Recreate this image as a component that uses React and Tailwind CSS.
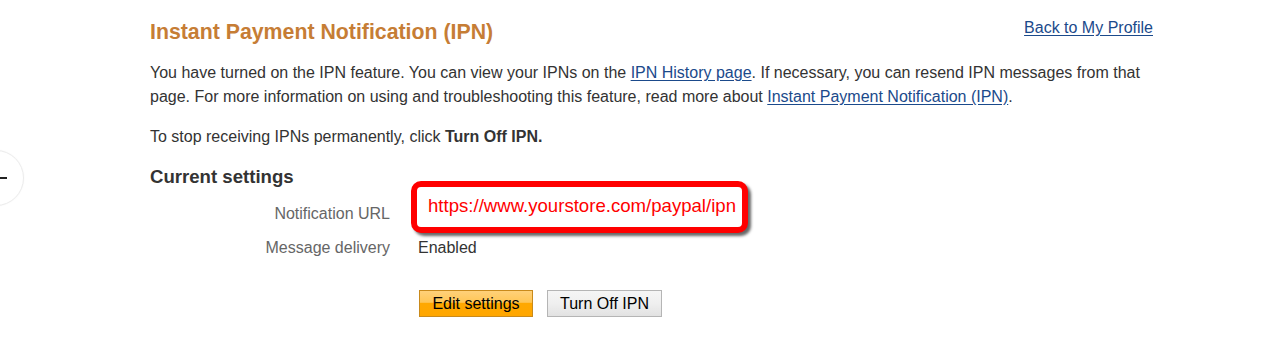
export default function App() {
  const font = { fontFamily: '"Liberation Sans", Arial, Helvetica, sans-serif' };
  return (
    <div className="relative w-[1261px] h-[344px] bg-white overflow-hidden" style={font}>
      {/* partially hidden round button at left edge */}
      <div className="absolute left-[-32px] top-[150px] w-[56px] h-[56px] rounded-full border border-[#ececec] bg-white shadow-[0_0_2px_rgba(0,0,0,0.04)] flex items-center justify-end pr-[16px]">
        <div className="w-[8px] h-[2px] bg-[#222]" />
      </div>

      <div className="ml-[150px] w-[1004px] pt-[19px]">
        <div className="flex justify-between items-start">
          <h1 className="text-[21.3px] leading-[26px] font-bold text-[#c67d35]">Instant Payment Notification (IPN)</h1>
          <a href="#" className="mt-[-1px] mr-[1px] text-[16px] leading-[20px] text-[#1b4a8b] underline underline-offset-[2px] decoration-[#1b4a8b]">Back to My Profile</a>
        </div>

        <p className="mt-[16px] text-[16px] leading-[24px] text-[#333]">
          You have turned on the IPN feature. You can view your IPNs on the{" "}
          <a href="#" className="text-[#1b4a8b] underline underline-offset-[2px]">IPN History page</a>. If necessary, you can resend IPN messages from that page. For more information on using and troubleshooting this feature, read more about{" "}
          <a href="#" className="text-[#1b4a8b] underline underline-offset-[2px]">Instant Payment Notification (IPN)</a>.
        </p>

        <p className="mt-[16px] text-[16px] leading-[24px] text-[#333]">
          To stop receiving IPNs permanently, click <span className="font-bold">Turn Off IPN.</span>
        </p>

        <h2 className="mt-[16px] text-[18.6px] leading-[24px] font-bold text-[#333]">Current settings</h2>

        <div className="flex items-start mt-[-8px]">
          <div className="w-[240px] text-right text-[16px] leading-[20px] text-[#666] pt-[23px]">Notification URL</div>
          <div className="ml-[21px] w-[337px] h-[52px] rounded-[10px] border-[6px] border-[#ff0000] bg-white shadow-[3px_3px_3px_rgba(0,0,0,0.6)] flex items-center pl-[11px]">
            <span className="text-[18.6px] leading-[22px] text-[#ff0000] mt-[-2px] whitespace-nowrap">https://www.yourstore.com/paypal/ipn</span>
          </div>
        </div>

        <div className="flex items-start mt-[5px]">
          <div className="w-[240px] text-right text-[16px] leading-[20px] text-[#666]">Message delivery</div>
          <div className="ml-[28px] text-[16px] leading-[20px] text-[#333]">Enabled</div>
        </div>

        <div className="flex gap-[14px] ml-[269px] mt-[32px]">
          <button className="h-[27px] w-[114px] border border-[#c98a1b] bg-[linear-gradient(#ffd17a_0%,#ffc656_45%,#ffa800_50%,#ffa600_100%)] text-[16px] text-black leading-[20px]">Edit settings</button>
          <button className="h-[27px] w-[115px] border border-[#b5b5b5] bg-[linear-gradient(#f5f5f5_0%,#efefef_50%,#e2e2e2_100%)] text-[16px] text-black leading-[20px]">Turn Off IPN</button>
        </div>
      </div>
    </div>
  );
}
